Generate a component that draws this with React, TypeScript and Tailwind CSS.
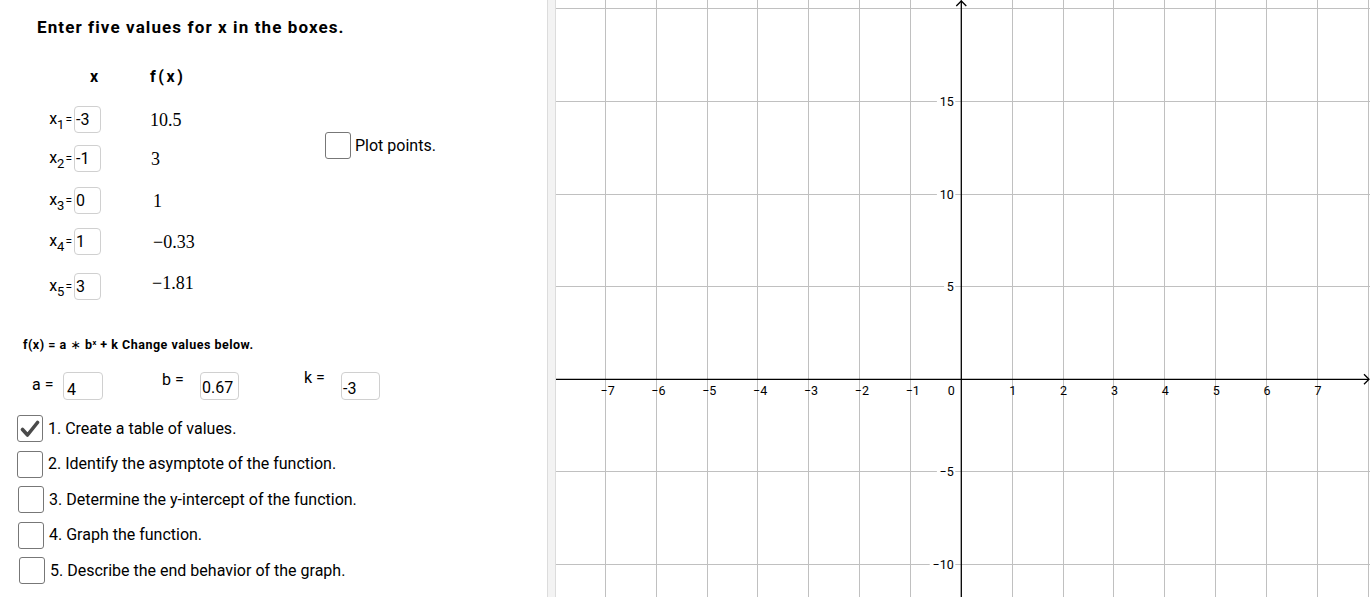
import React from 'react'

const roboto = { fontFamily: 'Roboto, "Liberation Sans", sans-serif' }

// table of x inputs and f(x) results
const rows = [
  { sub: '1', v: '-3', fx: '10.5', mt: 'mt-[19px]', fxCls: 'ml-[49px]' },
  { sub: '2', v: '-1', fx: '3', mt: 'mt-[12px]', fxCls: 'ml-[50px]' },
  { sub: '3', v: '0', fx: '1', mt: 'mt-[15px]', fxCls: 'ml-[52px]' },
  { sub: '4', v: '1', fx: '\u22120.33', mt: 'mt-[14px]', fxCls: 'ml-[52px]' },
  { sub: '5', v: '3', fx: '\u22121.81', mt: 'mt-[18px]', fxCls: 'ml-[51px] -translate-y-1' },
]

const tasks = [
  { text: '1. Create a table of values.', checked: true, pl: 'pl-[17px]' },
  { text: '2. Identify the asymptote of the function.', checked: false, pl: 'pl-[17px]' },
  { text: '3. Determine the y-intercept of the function.', checked: false, pl: 'pl-[18px]' },
  { text: '4. Graph the function.', checked: false, pl: 'pl-[18px]' },
  { text: '5. Describe the end behavior of the graph.', checked: false, pl: 'pl-[19px]' },
]

const CheckBox = ({ checked }: { checked?: boolean }) => (
  <div className="flex h-[27px] w-[26px] shrink-0 items-center justify-center rounded-[3px] border-[1.5px] border-[#777] bg-white">
    {checked && (
      <svg width="20" height="18" viewBox="0 0 20 18" fill="none">
        <path
          d="M2.5 9.5 L7.5 15 L17.5 2.5"
          stroke="#4a4a4a"
          strokeWidth="3.6"
          strokeLinecap="round"
          strokeLinejoin="round"
        />
      </svg>
    )}
  </div>
)

// coordinate grid, drawn in graph-area pixels
const W = 814
const H = 597
const ox = 405.3
const oy = 379.3
const ux = 50.86
const uy5 = 92.6

const Graph = () => {
  const xs: number[] = []
  for (let i = -8; i <= 8; i++) if (i !== 0) xs.push(i)
  const ys: number[] = []
  for (let j = -3; j <= 4; j++) if (j !== 0) ys.push(j)

  return (
    <svg width={W} height={H} viewBox={`0 0 ${W} ${H}`} className="block">
      <g stroke="#c0c0c0" strokeWidth="1" shapeRendering="crispEdges">
        {xs.map((i) => {
          const x = ox + i * ux
          if (x < 0 || x > W) return null
          return <line key={'vx' + i} x1={x} y1={0} x2={x} y2={H} />
        })}
        {ys.map((j) => {
          const y = oy - j * uy5
          if (y < 0 || y > H) return null
          return <line key={'hy' + j} x1={0} y1={y} x2={W} y2={y} />
        })}
      </g>

      {/* axes */}
      <g stroke="#000" strokeWidth="1.3" fill="none">
        <line x1={0} y1={oy} x2={W - 1} y2={oy} />
        <line x1={ox} y1={0.5} x2={ox} y2={H} />
        <polyline points={`${ox - 5},${6} ${ox},${1} ${ox + 5},${6}`} />
        <polyline points={`${W - 6},${oy - 5} ${W - 1},${oy} ${W - 6},${oy + 5}`} />
      </g>

      <g fill="#000" fontSize="12.5" style={roboto}>
        {xs.map((i) => {
          const x = ox + i * ux
          if (i < -7 || i > 7) return null
          return (
            <text
              key={'lx' + i}
              x={i < 0 ? x + 2.3 : x + 0.6}
              y={oy + 16}
              textAnchor="middle"
            >
              {i < 0 ? '\u2212' + -i : i}
            </text>
          )
        })}
        <text x={ox - 6.5} y={oy + 16} textAnchor="end">
          0
        </text>
        {ys.map((j) => {
          const y = oy - j * uy5
          const v = j * 5
          if (y < 20 || y > H - 10) return null
          const label = v < 0 ? '\u2212' + -v : String(v)
          const w = label.length * 7.2 + 3
          return (
            <g key={'ly' + j}>
              <rect x={ox - 7 - w} y={y - 6} width={w + 1} height={12} fill="#fff" />
              <text x={ox - 7.5} y={y + 4.5} textAnchor="end">
                {label}
              </text>
            </g>
          )
        })}
      </g>
    </svg>
  )
}

export default function App() {
  return (
    <div className="flex h-[600px] w-[1370px] items-start overflow-hidden bg-white text-black">
      <div className="flex h-[597px] w-full">
        {/* left panel */}
        <div className="w-[547px] shrink-0">
          <div
            className="pl-[37px] pt-[17px] text-[17px] font-bold leading-[20px] tracking-[1.1px]"
            style={roboto}
          >
            Enter five values for x in the boxes.
          </div>

          <div
            className="mt-[30px] flex pl-[90px] text-[16px] font-bold leading-[20px]"
            style={roboto}
          >
            <span className="w-[60px]">x</span>
            <span className="tracking-[2.6px]">f(x)</span>
          </div>

          <div className="flex">
            <div className="w-[325px]">
              {rows.map((r) => (
                <div key={r.sub} className={`flex h-[27px] items-center ${r.mt}`}>
                  <div
                    className="flex w-[74px] items-baseline justify-end pr-[2px] text-[16px] leading-[20px]"
                    style={roboto}
                  >
                    <span>x</span>
                    <span className="relative top-[5px] text-[13px] leading-none">{r.sub}</span>
                    <span className="ml-[1px] text-[12px]">=</span>
                  </div>
                  <div
                    className="flex h-[27px] w-[27px] items-center rounded-[4px] border border-[#d0d0d0] pl-[1px] text-[16px]"
                    style={roboto}
                  >
                    {r.v}
                  </div>
                  <span
                    className={`text-[18px] leading-[20px] ${r.fxCls}`}
                    style={{ fontFamily: '"Liberation Serif", "DejaVu Serif", serif' }}
                  >
                    {r.fx}
                  </span>
                </div>
              ))}
            </div>
            <div className="mt-[45px] flex h-[27px] items-center gap-[4px]">
              <CheckBox />
              <span className="text-[16px]" style={roboto}>
                Plot points.
              </span>
            </div>
          </div>

          <div
            className="mt-[38px] pl-[23px] text-[12.5px] font-bold leading-[14px] tracking-[0.5px]"
            style={roboto}
          >
            f(x) = a{' '}
            <span className="font-normal" style={{ fontFamily: '"DejaVu Sans", sans-serif' }}>
              {'\u2217'}
            </span>{' '}
            b<sup className="text-[7.5px]">x</sup> + k Change values below.
          </div>

          <div className="mt-[20px] flex items-start pl-[32px] text-[16px] leading-[20px]" style={roboto}>
            <span className="mt-[3px] w-[31px]">a =</span>
            <div className="h-[28px] w-[40px] rounded-[4px] border border-[#d0d0d0] pl-[3px] pt-[7px]">4</div>
            <span className="ml-[59px] mt-[-2px] w-[38px]">b =</span>
            <div className="h-[28px] w-[39px] rounded-[4px] border border-[#d0d0d0] pl-[1px] pt-[5px]">0.67</div>
            <span className="ml-[65px] mt-[-4px] w-[37px]">k =</span>
            <div className="h-[28px] w-[39px] rounded-[4px] border border-[#d0d0d0] pl-[1px] pt-[6px]">-3</div>
          </div>

          <div className="mt-[15px] flex flex-col gap-[8.5px]">
            {tasks.map((t) => (
              <div key={t.text} className={`flex h-[27px] items-center gap-[5px] ${t.pl}`}>
                <CheckBox checked={t.checked} />
                <span className="text-[16px] leading-[20px]" style={roboto}>
                  {t.text}
                </span>
              </div>
            ))}
          </div>
        </div>

        {/* splitter */}
        <div className="w-[9px] shrink-0 border-x border-[#dcdcdc] bg-[#f3f3f3]" />

        {/* graphics view */}
        <div className="flex-1 overflow-hidden">
          <Graph />
        </div>
      </div>
    </div>
  )
}
